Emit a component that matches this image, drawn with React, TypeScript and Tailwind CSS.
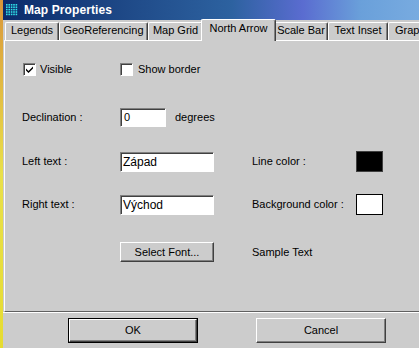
import React from 'react';

const raised =
  'border border-t-white border-l-white border-r-[#404040] border-b-[#404040] shadow-[inset_-1px_-1px_0_#808080] bg-[#cccccc]';
const sunken =
  'border border-t-[#808080] border-l-[#808080] border-r-white border-b-white shadow-[inset_1px_1px_0_#404040] bg-white';

function Tab({ label, width, selected, clipped }: { label: string; width: number; selected?: boolean; clipped?: boolean }) {
  if (selected) {
    return (
      <div
        className="relative z-10 -mx-[2px] -mb-[1px] flex h-[22px] shrink-0 items-start justify-center whitespace-nowrap rounded-t-[2px] border-t border-l border-r border-t-white border-l-white border-r-[#404040] bg-[#cccccc] pt-[3px] shadow-[inset_-1px_0_0_#808080]"
        style={{ width: width + 4 }}
      >
        {label}
      </div>
    );
  }
  return (
    <div
      className={`flex h-[18px] shrink-0 items-start whitespace-nowrap rounded-t-[2px] border-t border-l border-r border-t-white border-l-white border-r-[#404040] pt-[2px] shadow-[inset_-1px_0_0_#808080] ${
        clipped ? 'justify-start pl-[6px]' : 'justify-center'
      }`}
      style={{ width }}
    >
      {label}
    </div>
  );
}

function Checkbox({ checked }: { checked?: boolean }) {
  return (
    <div className={`flex h-[13px] w-[13px] shrink-0 items-center justify-center ${sunken}`}>
      {checked && (
        <svg width="9" height="9" viewBox="0 0 9 9">
          <path d="M1 3.5 L3.5 6 L8 1.5 L8 3.5 L3.5 8 L1 5.5 Z" fill="#000" />
        </svg>
      )}
    </div>
  );
}

export default function App() {
  return (
    <div
      className="flex h-[348px] w-[419px] overflow-hidden bg-[#cccccc] text-[11px] leading-none text-black"
      style={{ fontFamily: '"Liberation Sans", Arial, sans-serif' }}
    >
      {/* desktop behind the dialog */}
      <div className="h-full w-[3px] shrink-0 bg-linear-to-b from-[#d8963a] via-[#e9e04a] to-[#e6dc30]" />

      <div className="flex min-w-0 flex-1 flex-col overflow-hidden">
        {/* title bar */}
        <div className="flex h-[20px] shrink-0 items-center gap-[6px] bg-[linear-gradient(90deg,#0b2b6b_0%,#1f4a88_30%,#2d62a0_55%,#5a6cd0_72%,#6aa0da_86%,#78abe0_100%)] pl-[3px]">
          <svg width="12" height="12" viewBox="0 0 12 12">
            {[0, 1, 2, 3, 4].map((r) =>
              [0, 1, 2, 3, 4].map((c) => (
                <rect key={`${r}-${c}`} x={c * 2.4} y={r * 2.4} width="1.6" height="1.6" fill="#2fe0e8" />
              ))
            )}
          </svg>
          <span className="text-[12px] font-bold tracking-[0.1px] text-white">Map Properties</span>
        </div>

        {/* tabs, the last one runs past the window edge */}
        <div className="flex h-[20px] shrink-0 items-end pl-[2px]">
          <Tab label="Legends" width={54} />
          <Tab label="GeoReferencing" width={89} />
          <Tab label="Map Grid" width={55} />
          <Tab label="North Arrow" width={71} selected />
          <Tab label="Scale Bar" width={54} />
          <Tab label="Text Inset" width={60} />
          <Tab label="Grap" width={40} clipped />
        </div>

        {/* tab panel */}
        <div className="ml-[1px] flex h-[272px] shrink-0 flex-col border-t border-l border-b border-t-white border-l-white border-b-[#606060] pl-[17px]">
          <div className="mt-[22px] flex h-[13px] items-center">
            <div className="flex w-[98px] items-center gap-[4px] pl-[1px]">
              <Checkbox checked />
              <span>Visible</span>
            </div>
            <div className="flex items-center gap-[5px]">
              <Checkbox />
              <span>Show border</span>
            </div>
          </div>

          <div className="mt-[32px] flex h-[19px] items-center">
            <span className="w-[98px]">Declination :</span>
            <div className={`flex h-[19px] w-[46px] items-center pl-[3px] ${sunken}`}>0</div>
            <span className="ml-[9px]">degrees</span>
          </div>

          <div className="mt-[24px] flex h-[21px] items-center">
            <span className="w-[98px]">Left text :</span>
            <div className={`flex h-[20px] w-[94px] items-center pl-[2px] text-[12px] ${sunken}`}>Západ</div>
            <span className="ml-[38px] w-[104px]">Line color :</span>
            <div className="h-[21px] w-[27px] border border-[#404040] bg-black" />
          </div>

          <div className="mt-[22px] flex h-[21px] items-center">
            <span className="w-[98px]">Right text :</span>
            <div className={`flex h-[20px] w-[94px] items-center pl-[2px] text-[12px] ${sunken}`}>Východ</div>
            <span className="ml-[38px] w-[104px]">Background color :</span>
            <div className="h-[21px] w-[27px] border border-black bg-white" />
          </div>

          <div className="mt-[27px] flex h-[20px] items-center">
            <div className="w-[98px]" />
            <div className={`flex h-[20px] w-[94px] items-center justify-center ${raised}`}>Select Font...</div>
            <span className="ml-[38px]">Sample Text</span>
          </div>
        </div>
        <div className="h-px shrink-0 bg-white" />

        {/* dialog buttons */}
        <div className="flex flex-1 items-start gap-[58px] pt-[5px] pl-[65px]">
          <div className="h-[25px] w-[130px] border border-black">
            <div className={`flex h-full w-full items-center justify-center ${raised}`}>OK</div>
          </div>
          <div className={`flex h-[25px] w-[130px] items-center justify-center ${raised}`}>Cancel</div>
        </div>
      </div>
    </div>
  );
}
